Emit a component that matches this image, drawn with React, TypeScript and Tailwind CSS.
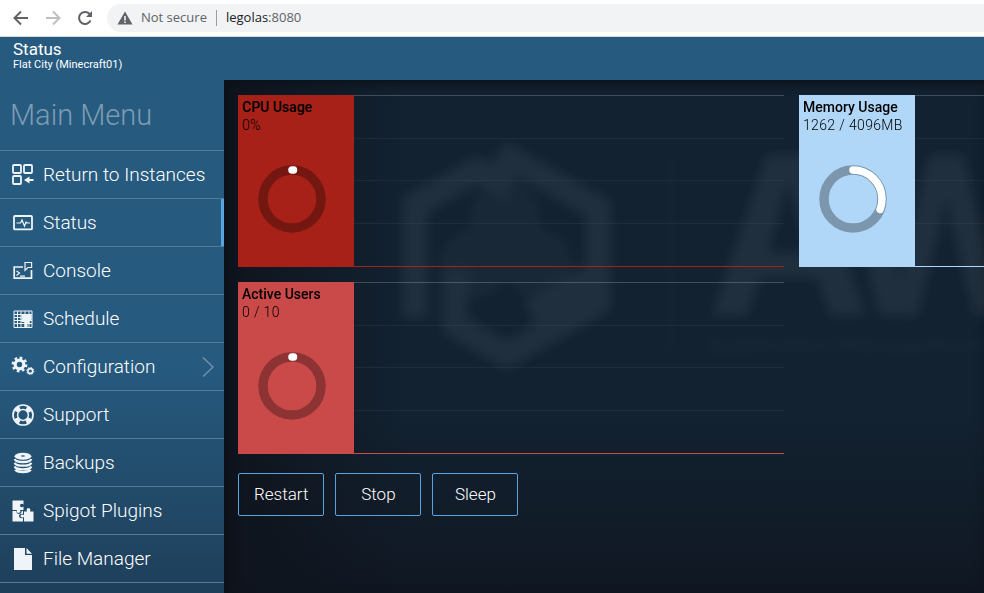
import { useId } from "react";
import type { ReactNode } from "react";

const icons: Record<string, ReactNode> = {
  instances: (
    <g fill="none" stroke="currentColor" strokeWidth="1.8">
      <rect x="2" y="2" width="8" height="8" rx="1" />
      <rect x="13" y="2" width="8" height="8" rx="1" />
      <rect x="2" y="13" width="8" height="8" rx="1" />
      <path d="M13 17l5.500-3.600v2.600h4v2h-4v2.600z" fill="currentColor" stroke="none" />
    </g>
  ),
  status: (
    <g fill="none" stroke="currentColor" strokeWidth="1.8">
      <rect x="3" y="5" width="18" height="13.4" rx="1" />
      <path d="M5.5 12h4l1.5-3 2.5 6 1.5-4 1 1h3" strokeWidth="1.2" />
    </g>
  ),
  console: (
    <g fill="none" stroke="currentColor" strokeWidth="1.7">
      <path d="M12 8H3.2v11.2h17.3V11" />
      <path d="M14 3.500h6.600v5H17l-3 2.800z" strokeWidth="1.2" />
      <path d="M5.5 12l3 2-3 2.5M9 17.2h5" strokeWidth="1.2" />
    </g>
  ),
  schedule: (
    <g>
      <path fill="none" stroke="currentColor" strokeWidth="1" d="M3 4h18v16.500H3zM3 7.500h18M3 10.500h18M3 13.500h18M3 16.500h18M6.500 4v16.500M10 4v16.500M14 4v16.500M18 4v16.500" />
      <path fill="currentColor" d="M10.500 7h10v7h-2v2h-2v4h-3v-5h-3z" />
    </g>
  ),
  configuration: (
    <g fill="none" stroke="currentColor">
      <circle cx="8.5" cy="9.5" r="4.3" strokeWidth="3.2" />
      <circle cx="8.5" cy="9.5" r="6.7" strokeWidth="2.4" strokeDasharray="2.63 2.63" />
      <circle cx="19.3" cy="16" r="2.4" strokeWidth="1.6" />
      <circle cx="19.3" cy="16" r="3.6" strokeWidth="1" strokeDasharray="1.4 1.4" />
    </g>
  ),
  support: (
    <g fill="none" stroke="currentColor">
      <circle cx="12" cy="12" r="10" strokeWidth="1.7" />
      <circle cx="12" cy="12" r="5.4" strokeWidth="1.5" />
      <circle cx="12" cy="12" r="7.8" strokeWidth="4.6" strokeDasharray="5.4 6.85" strokeDashoffset="-3.4" />
    </g>
  ),
  backups: (
    <g>
      <ellipse cx="12" cy="5.2" rx="8.4" ry="3.5" fill="currentColor" />
      <ellipse cx="12" cy="5" rx="2" ry="0.8" fill="#24567a" />
      <path fill="none" stroke="currentColor" strokeWidth="2.3" d="M3.8 8c1 4 15.400 4 16.400 0M3.800 11.700c1 4 15.400 4 16.400 0M3.800 15.400c1 4 15.400 4 16.400 0M4.200 18.600c2 3.300 13.600 3.300 15.600 0" />
    </g>
  ),
  plugins: (
    <g fill="currentColor">
      <path d="M1.500 1.500h11v4c-2-1.500-3.400-.5-3.400 1s1.400 2.500 3.400 1V11H9c1 2-.2 3-1.500 3S5 13 6 11H1.500z" />
      <path d="M1.500 12h3.700c.3 4 5.200 4 5.500 0H12v3c-2.500-.8-4 .5-4 2s1.500 2.800 4 2v3.500H1.500z" />
      <path d="M13 12.500h3c-1-2 0-3.500 1.500-3.500s2.400 1.500 1.500 3.500h3.500v10H13v-4.600c-2 1.300-3.500.5-3.500-.9s1.500-2.200 3.500-1z" />
    </g>
  ),
  files: (
    <g fill="currentColor">
      <path d="M3 1h11v7h7v15H3z" />
      <path d="M15.500 1L21 6.700h-5.500z" />
    </g>
  ),
};

const menu = [
  { icon: "instances", label: "Return to Instances" },
  { icon: "status", label: "Status", active: true },
  { icon: "console", label: "Console" },
  { icon: "schedule", label: "Schedule" },
  { icon: "configuration", label: "Configuration", nested: true },
  { icon: "support", label: "Support" },
  { icon: "backups", label: "Backups" },
  { icon: "plugins", label: "Spigot Plugins" },
  { icon: "files", label: "File Manager" },
];

function BrowserBar() {
  return (
    <div className="flex h-[37px] shrink-0 items-center border-b border-[#d5d7da] bg-white pl-3 text-[#5f6368]">
      <div className="flex gap-3.5">
        <button type="button" aria-label="Back" className="size-[18px]">
          <svg viewBox="0 0 18 18" fill="none" stroke="currentColor" strokeWidth="2">
            <path d="M16 9H3M9 2.500L2.500 9 9 15.500" />
          </svg>
        </button>
        <button type="button" aria-label="Forward" className="size-[18px] text-[#bdbfc2]">
          <svg viewBox="0 0 18 18" fill="none" stroke="currentColor" strokeWidth="2">
            <path d="M2 9h13M9 2.500L15.500 9 9 15.500" />
          </svg>
        </button>
        <button type="button" aria-label="Reload" className="size-[18px]">
          <svg viewBox="0 0 18 18" fill="none" stroke="currentColor" strokeWidth="2">
            <path d="M14.500 11.500A6 6 0 1 1 13.300 4.700L15 6.500" />
            <path d="M16 2v6h-6z" fill="currentColor" stroke="none" />
          </svg>
        </button>
      </div>
      <div className="ml-[13px] flex h-7 flex-1 items-center rounded-l-full bg-[#f1f3f4] pl-2.5 font-['Open_Sans',sans-serif] text-[13px]">
        <svg viewBox="0 0 16 16" className="mr-2 size-4" aria-hidden="true">
          <path d="M8 1.500l7.500 13H.5z" fill="currentColor" />
          <path d="M8 6v4.500M8 11.500v1.500" stroke="#f1f3f4" strokeWidth="1.600" />
        </svg>
        <span>Not secure</span>
        <span className="mx-[9px] h-4 w-px bg-[#9a9da1]" />
        <span>
          <span className="text-[#202124]">legolas</span>:8080
        </span>
      </div>
    </div>
  );
}

function Gauge({ fraction }: { fraction: number }) {
  const length = 2 * Math.PI * 29;
  return (
    <svg viewBox="0 0 68 68" className="mt-8 ml-4 size-[68px]" fill="none" aria-hidden="true">
      <circle cx="34" cy="34" r="29" stroke="#000" strokeOpacity="0.3" strokeWidth="9.500" />
      <circle
        cx="34"
        cy="34"
        r="29"
        stroke="#fff"
        strokeWidth="7.500"
        strokeLinecap="round"
        strokeDasharray={`${Math.max(length * fraction, 1.5)} ${length}`}
        transform="rotate(-90 34 34)"
      />
    </svg>
  );
}

type MetricProps = { title: string; value: string; fraction: number; fill: string };

function Metric({ title, value, fraction, fill }: MetricProps) {
  return (
    <section className="flex h-[172px]">
      <div className={`w-[116px] shrink-0 px-1 pt-1 ${fill}`}>
        <h2 className="text-sm leading-4 font-medium text-black">{title}</h2>
        <p className="mt-0.5 text-sm leading-4 font-light tracking-wide whitespace-nowrap text-black">{value}</p>
        <Gauge fraction={fraction} />
      </div>
      <div className="flex flex-1 flex-col border-t border-white/20">
        <div className="grid flex-1 grid-rows-4 divide-y divide-white/5">
          <span />
          <span />
          <span />
          <span />
        </div>
        <div className={`h-px ${fill}`} />
      </div>
    </section>
  );
}

function Watermark() {
  const blur = useId();
  return (
    <svg viewBox="0 0 760 513" className="absolute top-0 left-0 h-[513px] w-[760px]" aria-hidden="true">
      <defs>
        <filter id={blur} x="-10%" y="-10%" width="120%" height="120%">
          <feGaussianBlur stdDeviation="6" />
        </filter>
      </defs>
      <g filter={`url(#${blur})`} opacity="0.06" fill="#fff">
        <g fill="none" stroke="#fff" strokeWidth="26">
          <path d="M191 238V125l62-35 34 17" />
          <path d="M275 72l99 56v66l-68 40" />
          <path d="M231 190v55l52 30 91-52v-20" />
        </g>
        <g opacity="0.55">
          <circle cx="281" cy="138" r="35" />
          <circle cx="250" cy="184" r="34" />
          <circle cx="314" cy="184" r="34" />
        </g>
        <rect x="442" y="72" width="8" height="202" opacity="0.3" />
        <g fontFamily="Inter, sans-serif" fontWeight="700" fontSize="222">
          <text x="482" y="236">
            A
          </text>
          <text x="607" y="236">
            W
          </text>
        </g>
        <text x="480" y="273" fontFamily="Roboto, sans-serif" fontWeight="700" fontSize="25" opacity="0.5">
          Application Management
        </text>
      </g>
    </svg>
  );
}

export default function App() {
  return (
    <div className="flex min-h-screen flex-col overflow-hidden bg-[#265a7f] font-['Roboto',sans-serif] text-white">
      <BrowserBar />
      <header className="h-[43px] shrink-0 px-[13px] pt-[3px]">
        <h1 className="text-[17px] leading-[18px] font-normal">Status</h1>
        <p className="text-[11px] leading-[14px] font-normal">Flat City (Minecraft01)</p>
      </header>
      <div className="flex flex-1">
        <nav className="w-56 shrink-0 bg-linear-to-b from-[#265a7f] from-55% to-[#1e3f5a]">
          <h2 className="h-[70px] pt-4 pl-2.5 text-[29px] leading-[38px] font-light text-[#7d9cb3]">Main Menu</h2>
          <ul className="border-b border-[#547b97]">
            {menu.map((item) => (
              <li key={item.label} className="border-t border-[#547b97]">
                <a
                  href="#"
                  aria-current={item.active ? "page" : undefined}
                  className={`flex h-[47px] items-center pl-[11px] text-[19px] font-light text-white ${
                    item.active ? "border-r-3 border-[#5ba3dc]" : ""
                  }`}
                >
                  <svg viewBox="0 0 24 24" className="mr-2 size-6 text-[#eef4f8]" aria-hidden="true">
                    {icons[item.icon]}
                  </svg>
                  <span className="pt-0.5">{item.label}</span>
                  {item.nested && (
                    <svg viewBox="0 0 12 22" className="mr-2.5 ml-auto h-[22px] w-3 text-[#6f93ad]" fill="none" stroke="currentColor" strokeWidth="1.500" aria-hidden="true">
                      <path d="M1 1.500L11 11 1 20.500" />
                    </svg>
                  )}
                </a>
              </li>
            ))}
          </ul>
        </nav>
        <main className="relative min-w-0 flex-1 overflow-hidden bg-[#122231] bg-[linear-gradient(to_right,#0f141d,transparent_180px),linear-gradient(to_bottom,transparent_65%,#101722)] px-3.5 pt-[15px] shadow-[inset_4px_4px_12px_#0b1119]">
          <Watermark />
          <div className="relative grid grid-cols-[546px_546px] gap-[15px]">
            <Metric title="CPU Usage" value="0%" fraction={0} fill="bg-[#a72119]" />
            <Metric title="Memory Usage" value="1262 / 4096MB" fraction={0.308} fill="bg-[#b0d7f8]" />
            <Metric title="Active Users" value="0 / 10" fraction={0} fill="bg-[#ca4a49]" />
          </div>
          <div className="relative mt-[19px] flex gap-[11px]">
            {["Restart", "Stop", "Sleep"].map((label) => (
              <button key={label} type="button" className="h-[43px] min-w-[86px] rounded-xs border border-[#5ba3dc] px-[15px] text-[17px] font-light">
                {label}
              </button>
            ))}
          </div>
        </main>
      </div>
    </div>
  );
}
